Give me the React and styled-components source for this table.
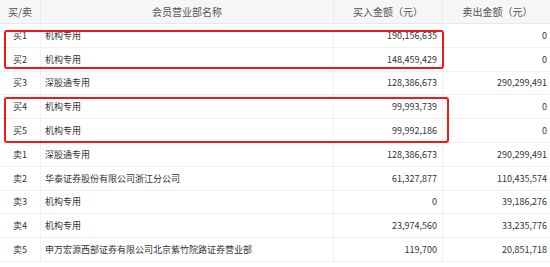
import React from "react";
import styled, { createGlobalStyle } from "styled-components";

const Global = createGlobalStyle`
  html, body { margin: 0; padding: 0; background: #fff; overflow: hidden; }
  body { font-family: "Noto Sans CJK SC", "Microsoft YaHei", sans-serif; }
`;

const Wrap = styled.div`
  position: relative;
  width: 552px;
`;

const Grid = "40px 293px 109px 110px";

const HeadRow = styled.div`
  display: grid;
  grid-template-columns: ${Grid};
  height: 24px;
  background: #f6f6f6;
  border-bottom: 1px solid #e8e8e8;
  box-sizing: border-box;
`;

const HeadCell = styled.div`
  display: flex;
  align-items: center;
  justify-content: center;
  font-size: 10px;
  color: #555;
  border-left: ${(p) => (p.$first ? "none" : "1px solid #ececec")};
  white-space: nowrap;
`;

const Row = styled.div`
  display: grid;
  grid-template-columns: ${Grid};
  height: 23.8px;
  border-bottom: 1px solid #efefef;
  box-sizing: border-box;
`;

const Cell = styled.div`
  display: flex;
  align-items: center;
  justify-content: ${(p) =>
    p.$align === "right" ? "flex-end" : p.$align === "center" ? "center" : "flex-start"};
  padding: ${(p) => (p.$align === "right" ? "0 5px 0 0" : p.$align === "center" ? "0" : "0 0 0 4px")};
  font-size: 9px;
  color: #333;
  border-left: ${(p) => (p.$first ? "none" : "1px solid #f2f2f2")};
  white-space: nowrap;
  overflow: hidden;
`;

const Highlight = styled.div`
  position: absolute;
  border: 2px solid #f01818;
  border-radius: 3px;
  box-sizing: border-box;
  pointer-events: none;
`;

const rows = [
  ["买1", "机构专用", "190,156,635", "0"],
  ["买2", "机构专用", "148,459,429", "0"],
  ["买3", "深股通专用", "128,386,673", "290,299,491"],
  ["买4", "机构专用", "99,993,739", "0"],
  ["买5", "机构专用", "99,992,186", "0"],
  ["卖1", "深股通专用", "128,386,673", "290,299,491"],
  ["卖2", "华泰证券股份有限公司浙江分公司", "61,327,877", "110,435,574"],
  ["卖3", "机构专用", "0", "39,186,276"],
  ["卖4", "机构专用", "23,974,560", "33,235,776"],
  ["卖5", "申万宏源西部证券有限公司北京紫竹院路证券营业部", "119,700", "20,851,718"],
];

export default function App() {
  return (
    <>
      <Global />
      <Wrap>
        <HeadRow>
          <HeadCell $first>买/卖</HeadCell>
          <HeadCell>会员营业部名称</HeadCell>
          <HeadCell>买入金额（元）</HeadCell>
          <HeadCell>卖出金额（元）</HeadCell>
        </HeadRow>
        {rows.map((r) => (
          <Row key={r[0]}>
            <Cell $first $align="center">{r[0]}</Cell>
            <Cell>{r[1]}</Cell>
            <Cell $align="right">{r[2]}</Cell>
            <Cell $align="right">{r[3]}</Cell>
          </Row>
        ))}
        <Highlight style={{ left: 4, top: 30, width: 440, height: 39 }} />
        <Highlight style={{ left: 4, top: 97, width: 445, height: 46 }} />
      </Wrap>
    </>
  );
}
